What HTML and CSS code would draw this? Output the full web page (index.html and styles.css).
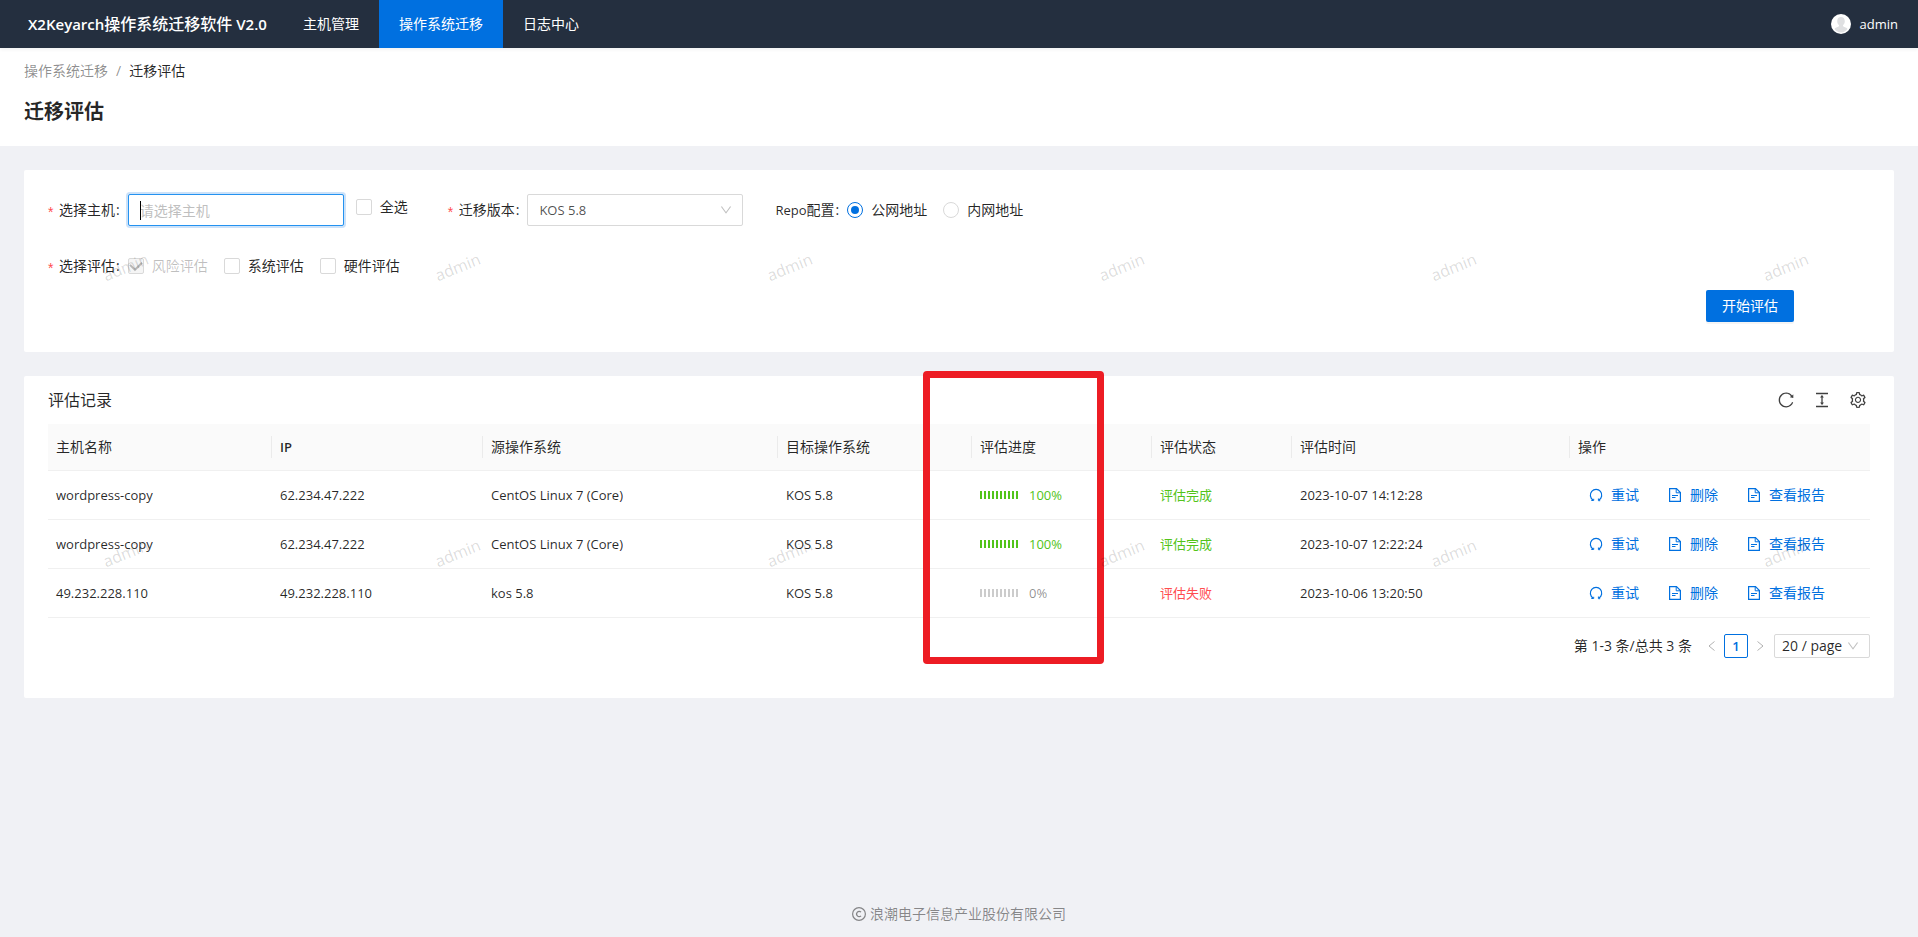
FILE: index.html
```html
<!DOCTYPE html>
<html lang="zh-CN">
<head>
<meta charset="utf-8">
<title>迁移评估</title>
<link rel="stylesheet" href="styles.css">
</head>
<body>
<svg class="sprite" aria-hidden="true">
  <symbol id="i-down" viewBox="64 64 896 896"><path d="M884 256h-75c-5.1 0-9.9 2.5-12.9 6.6L512 654.2 227.9 262.6c-3-4.1-7.8-6.6-12.9-6.6h-75c-6.5 0-10.3 7.4-6.5 12.7l352.6 486.1c12.8 17.6 39 17.6 51.7 0l352.6-486.1c3.9-5.3.1-12.7-6.4-12.7z"/></symbol>
  <symbol id="i-reload" viewBox="64 64 896 896"><path d="M909.1 209.3l-56.4 44.1C775.8 155.1 656.2 92 521.9 92 290 92 102.3 279.5 102 511.5 101.7 743.7 289.8 932 521.9 932c181.3 0 335.8-115 394.6-276.1 1.5-4.2-.7-8.9-4.9-10.3l-56.7-19.5a8 8 0 00-10.1 4.8c-1.8 5-3.8 10-5.9 14.9-17.3 41-42.1 77.8-73.7 109.4A344.77 344.77 0 01655.9 829c-42.3 17.9-87.4 27-133.8 27-46.5 0-91.5-9.1-133.8-27A341.5 341.5 0 01279 755.2a342.16 342.16 0 01-73.7-109.4c-17.9-42.4-27-87.4-27-133.9s9.1-91.5 27-133.9c17.3-41 42.1-77.8 73.7-109.4 31.6-31.6 68.4-56.4 109.3-73.8 42.3-17.9 87.4-27 133.8-27 46.5 0 91.5 9.1 133.8 27a341.5 341.5 0 01109.3 73.8c9.9 9.9 19.2 20.4 27.8 31.4l-60.2 47a8 8 0 003 14.1l175.6 43c5 1.2 9.9-2.6 9.9-7.7l.8-180.9c-.1-6.6-7.8-10.3-13-6.2z"/></symbol>
  <symbol id="i-height" viewBox="64 64 896 896"><path d="M840 836H184c-4.4 0-8 3.6-8 8v60c0 4.4 3.6 8 8 8h656c4.4 0 8-3.6 8-8v-60c0-4.4-3.6-8-8-8zm0-724H184c-4.4 0-8 3.6-8 8v60c0 4.4 3.6 8 8 8h656c4.4 0 8-3.6 8-8v-60c0-4.4-3.6-8-8-8zM610.8 378c6 0 9.4-7 5.7-11.7L515.7 238.7a7.14 7.14 0 00-11.3 0L403.6 366.3a7.23 7.23 0 005.7 11.7H476v268h-62.8c-6 0-9.4 7-5.7 11.7l100.8 127.5c2.9 3.7 8.5 3.7 11.3 0l100.8-127.5c3.7-4.7.4-11.7-5.7-11.7H548V378h62.8z"/></symbol>
  <symbol id="i-setting" viewBox="64 64 896 896"><path d="M924.8 625.7l-65.5-56c3.1-19 4.7-38.4 4.7-57.8s-1.6-38.8-4.7-57.8l65.5-56a32.03 32.03 0 009.3-35.2l-.9-2.6a443.74 443.74 0 00-79.7-137.9l-1.8-2.1a32.12 32.12 0 00-35.1-9.5l-81.3 28.9c-30-24.6-63.5-44-99.7-57.6l-15.7-85a32.05 32.05 0 00-25.8-25.7l-2.7-.5c-52.1-9.4-106.9-9.4-159 0l-2.7.5a32.05 32.05 0 00-25.8 25.7l-15.8 85.4a351.86 351.86 0 00-99 57.4l-81.9-29.1a32 32 0 00-35.1 9.5l-1.8 2.1a446.02 446.02 0 00-79.7 137.9l-.9 2.6c-4.5 12.5-.8 26.5 9.3 35.2l66.3 56.6c-3.1 18.8-4.6 38-4.6 57.1 0 19.2 1.5 38.4 4.6 57.1L99 625.5a32.03 32.03 0 00-9.3 35.2l.9 2.6c18.1 50.4 44.9 96.9 79.7 137.9l1.8 2.1a32.12 32.12 0 0035.1 9.5l81.9-29.1c29.8 24.5 63.1 43.9 99 57.4l15.8 85.4a32.05 32.05 0 0025.8 25.7l2.7.5a449.4 449.4 0 00159 0l2.7-.5a32.05 32.05 0 0025.8-25.7l15.7-85a350 350 0 0099.7-57.6l81.3 28.9a32 32 0 0035.1-9.5l1.8-2.1c34.8-41.1 61.6-87.5 79.7-137.9l.9-2.6c4.5-12.3.8-26.3-9.3-35zM788.3 465.9c2.5 15.1 3.8 30.6 3.8 46.1s-1.3 31-3.8 46.1l-6.6 40.1 74.7 63.9a370.03 370.03 0 01-42.6 73.6L721 702.8l-31.4 25.8c-23.9 19.6-50.5 35-79.3 45.8l-38.1 14.3-17.9 97a377.5 377.5 0 01-85 0l-17.9-97.2-37.8-14.5c-28.5-10.8-55-26.2-78.7-45.7l-31.4-25.9-93.4 33.2c-17-22.9-31.2-47.6-42.6-73.6l75.5-64.5-6.5-40c-2.4-14.9-3.7-30.3-3.7-45.5 0-15.3 1.2-30.6 3.7-45.5l6.5-40-75.5-64.5c11.3-26.1 25.6-50.7 42.6-73.6l93.4 33.2 31.4-25.9c23.7-19.5 50.2-34.9 78.7-45.7l37.9-14.3 17.9-97.2c28.1-3.2 56.8-3.2 85 0l17.9 97 38.1 14.3c28.7 10.8 55.4 26.2 79.3 45.8l31.4 25.8 92.8-32.9c17 22.9 31.2 47.6 42.6 73.6L781.8 426l6.5 39.9zM512 326c-97.2 0-176 78.8-176 176s78.8 176 176 176 176-78.8 176-176-78.8-176-176-176zm79.2 255.2A111.6 111.6 0 01512 614c-29.9 0-58-11.7-79.2-32.8A111.6 111.6 0 01400 502c0-29.9 11.7-58 32.8-79.2C454 401.6 482.1 390 512 390c29.9 0 58 11.6 79.2 32.8A111.6 111.6 0 01624 502c0 29.9-11.7 58-32.8 79.2z"/></symbol>
  <symbol id="i-retry" viewBox="0 0 14 14"><path d="M4 11.900A5.700 5.700 0 1 1 9.900 12" fill="none" stroke="currentColor" stroke-width="1.200"/><path d="M2.300 12.500H4.700V10.800M9.400 10.500V12.700H11.200" fill="none" stroke="currentColor"/></symbol>
  <symbol id="i-file" viewBox="0 0 14 14"><path d="M1.600.6H8.500L12.400 4.500V13.400H1.600Z" fill="none" stroke="currentColor" stroke-width="1.200"/><path d="M8.200.8V4.800H12.200" fill="none" stroke="currentColor"/><path d="M4 7.500H10M4 9.500H7.500" stroke="currentColor"/></symbol>
  <symbol id="i-left" viewBox="0 0 12 12"><path d="M8.500 1.500L3 6l5.500 4.500" fill="none" stroke="currentColor"/></symbol>
  <symbol id="i-right" viewBox="0 0 12 12"><path d="M3.500 1.500L9 6l-5.500 4.500" fill="none" stroke="currentColor"/></symbol>
</svg>

<header class="topbar">
  <strong class="brand"><span class="brand-latin">X2Keyarch</span>操作系统迁移软件<span class="brand-latin"> V2.0</span></strong>
  <nav class="menu">
    <a href="#">主机管理</a>
    <a href="#" class="active" aria-current="page">操作系统迁移</a>
    <a href="#">日志中心</a>
  </nav>
  <button type="button" class="account">
    <svg class="avatar" viewBox="0 0 20 20" aria-hidden="true"><circle cx="10" cy="10" r="10" fill="#fff"/><path d="M10 3c2.400 0 3.800 1.600 3.800 4.200 0 1.800-.8 3.200-1.900 4 .1 1.300 1 1.700 2.600 2.200 1 .3 1.700.8 2 1.600A8.700 8.700 0 0 1 10 18.600 8.700 8.700 0 0 1 3.500 15c.3-.8 1-1.300 2-1.600 1.600-.5 2.500-.9 2.600-2.200-1.100-.8-1.900-2.200-1.900-4C6.200 4.600 7.600 3 10 3z" fill="#dfe0e2"/></svg>
    <span class="latin">admin</span>
  </button>
</header>

<div class="page-head">
  <nav class="crumbs" aria-label="面包屑"><a href="#">操作系统迁移</a><span class="sep">/</span><span class="here">迁移评估</span></nav>
  <h1>迁移评估</h1>
</div>

<main class="content">
  <form class="card filter">
    <div class="row">
      <label class="label required" for="host">选择主机</label>
      <span class="field"><input class="text" id="host" type="text" placeholder="请选择主机"></span>
      <label class="option all"><input type="checkbox"><span>全选</span></label>
      <label class="label required" for="version">迁移版本</label>
      <span class="select version"><select id="version"><option>KOS 5.8</option></select><svg class="chevron"><use href="#i-down"/></svg></span>
      <span class="label" id="repo-label"><span class="latin">Repo</span>配置</span>
      <span class="options" role="radiogroup" aria-labelledby="repo-label">
        <label class="option"><input type="radio" name="repo" checked><span>公网地址</span></label>
        <label class="option"><input type="radio" name="repo"><span>内网地址</span></label>
      </span>
    </div>
    <div class="row">
      <span class="label required" id="kind-label">选择评估</span>
      <span class="options" role="group" aria-labelledby="kind-label">
        <label class="option"><input type="checkbox" checked disabled><span>风险评估</span></label>
        <label class="option"><input type="checkbox"><span>系统评估</span></label>
        <label class="option"><input type="checkbox"><span>硬件评估</span></label>
      </span>
    </div>
    <div class="submit"><button type="button" class="primary">开始评估</button></div>
  </form>

  <section class="card records">
    <div class="toolbar">
      <h2>评估记录</h2>
      <button type="button" aria-label="刷新"><svg><use href="#i-reload"/></svg></button>
      <button type="button" aria-label="密度"><svg><use href="#i-height"/></svg></button>
      <button type="button" aria-label="列设置"><svg><use href="#i-setting"/></svg></button>
    </div>
    <table>
      <colgroup><col class="c-name"><col class="c-ip"><col class="c-source"><col class="c-target"><col class="c-progress"><col class="c-state"><col class="c-time"><col class="c-action"></colgroup>
      <thead><tr><th>主机名称</th><th class="latin">IP</th><th>源操作系统</th><th>目标操作系统</th><th>评估进度</th><th>评估状态</th><th>评估时间</th><th>操作</th></tr></thead>
      <tbody>
        <tr>
          <td class="latin">wordpress-copy</td><td class="latin">62.234.47.222</td><td class="latin">CentOS Linux 7 (Core)</td><td class="latin">KOS 5.8</td>
          <td><div class="progress done"><span class="steps"><i></i><i></i><i></i><i></i><i></i><i></i><i></i><i></i><i></i><i></i></span><span class="latin">100%</span></div></td>
          <td class="state ok">评估完成</td><td class="latin">2023-10-07 14:12:28</td>
          <td><div class="actions"><a href="#"><svg><use href="#i-retry"/></svg>重试</a><a href="#"><svg><use href="#i-file"/></svg>删除</a><a href="#"><svg><use href="#i-file"/></svg>查看报告</a></div></td>
        </tr>
        <tr>
          <td class="latin">wordpress-copy</td><td class="latin">62.234.47.222</td><td class="latin">CentOS Linux 7 (Core)</td><td class="latin">KOS 5.8</td>
          <td><div class="progress done"><span class="steps"><i></i><i></i><i></i><i></i><i></i><i></i><i></i><i></i><i></i><i></i></span><span class="latin">100%</span></div></td>
          <td class="state ok">评估完成</td><td class="latin">2023-10-07 12:22:24</td>
          <td><div class="actions"><a href="#"><svg><use href="#i-retry"/></svg>重试</a><a href="#"><svg><use href="#i-file"/></svg>删除</a><a href="#"><svg><use href="#i-file"/></svg>查看报告</a></div></td>
        </tr>
        <tr>
          <td class="latin">49.232.228.110</td><td class="latin">49.232.228.110</td><td class="latin">kos 5.8</td><td class="latin">KOS 5.8</td>
          <td><div class="progress"><span class="steps"><i></i><i></i><i></i><i></i><i></i><i></i><i></i><i></i><i></i><i></i></span><span class="latin">0%</span></div></td>
          <td class="state fail">评估失败</td><td class="latin">2023-10-06 13:20:50</td>
          <td><div class="actions"><a href="#"><svg><use href="#i-retry"/></svg>重试</a><a href="#"><svg><use href="#i-file"/></svg>删除</a><a href="#"><svg><use href="#i-file"/></svg>查看报告</a></div></td>
        </tr>
      </tbody>
    </table>
    <div class="pager">
      <span class="total">第 1-3 条/总共 3 条</span>
      <button type="button" class="step" aria-label="上一页" disabled><svg><use href="#i-left"/></svg></button>
      <button type="button" class="current latin">1</button>
      <button type="button" class="step" aria-label="下一页" disabled><svg><use href="#i-right"/></svg></button>
      <span class="select size"><select aria-label="每页条数"><option>20 / page</option></select><svg class="chevron"><use href="#i-down"/></svg></span>
    </div>
    <div class="marker" aria-hidden="true"></div>
  </section>

  <div class="watermark" aria-hidden="true">
    <span>admin</span><span>admin</span><span>admin</span><span>admin</span><span>admin</span><span>admin</span>
    <span>admin</span><span>admin</span><span>admin</span><span>admin</span><span>admin</span><span>admin</span>
  </div>
</main>

<footer class="footer">
  <svg viewBox="0 0 14 14" aria-hidden="true"><circle cx="7" cy="7" r="6.400" fill="none" stroke="currentColor" stroke-width="1.200"/><path d="M9 5.200A2.500 2.700 0 1 0 9 8.800" fill="none" stroke="currentColor" stroke-width="1.200"/></svg>
  <span>浪潮电子信息产业股份有限公司</span>
</footer>
</body>
</html>
```
FILE: styles.css
```css
:root {
  --blue: #0070e0;
  --text: rgba(0, 0, 0, 0.85);
  --muted: rgba(0, 0, 0, 0.45);
  --line: #d9d9d9;
}

* { box-sizing: border-box; }

body {
  margin: 0;
  min-height: 100vh;
  display: flex;
  flex-direction: column;
  background: #f0f1f5;
  color: var(--text);
  font: 14px/22px "Open Sans", "Noto Sans CJK SC", sans-serif;
}

button, input, select { font: inherit; color: inherit; margin: 0; }
button { cursor: pointer; }
a { color: inherit; text-decoration: none; }
svg { fill: currentColor; display: block; }
.sprite { display: none; }
.latin { font-size: 13px; }

.topbar {
  display: flex;
  align-items: stretch;
  height: 48px;
  padding: 0 20px 0 28px;
  background: #242f3f;
  color: #fff;
  box-shadow: 0 1px 4px rgba(0, 21, 41, 0.08);
  line-height: 48px;
  z-index: 1;
}
.brand { width: 255px; font-size: 16px; font-weight: 500; white-space: nowrap; }
.brand-latin { font-size: 15px; font-weight: 600; white-space: pre; }
.menu { display: flex; flex: 1; }
.menu a { padding: 0 20px; }
.menu .active { background: var(--blue); }
.account { display: flex; align-items: center; gap: 9px; border: 0; padding: 0; background: none; color: #fff; }
.avatar { width: 20px; height: 20px; }

.page-head { background: #fff; padding: 12px 24px 18px; }
.crumbs { color: var(--muted); }
.crumbs .sep { margin: 0 8px; }
.crumbs .here { color: var(--text); }
.page-head h1 { margin: 14px 0 0; font-size: 20px; line-height: 32px; font-weight: 600; }

.content { position: relative; padding: 24px; display: grid; gap: 24px; flex: 1; align-content: start; }
.card { background: #fff; border-radius: 2px; position: relative; padding: 24px; min-width: 0; }

.filter { padding-bottom: 30px; }
.filter .row { display: flex; align-items: center; height: 32px; }
.filter .row + .row { margin-top: 24px; }
.label { display: flex; align-items: center; margin-right: 8px; white-space: nowrap; }
.label::after { content: ":"; margin-left: 1px; }
.required::before { content: "*"; width: 7px; padding-top: 4px; margin-right: 4px; color: #ff4d4f; font-family: "Liberation Sans", sans-serif; }
.field { position: relative; display: block; }
.field::after { content: ""; position: absolute; left: 12px; top: 7px; width: 1px; height: 19px; background: #000; }
.text {
  display: block;
  width: 216px;
  height: 32px;
  padding: 0 11px;
  border: 1px solid #2492f0;
  border-radius: 2px;
  box-shadow: 0 0 0 2px rgba(0, 112, 224, 0.2);
  outline: 0;
}
.text::placeholder { color: #bfbfbf; }
.option { display: flex; align-items: center; gap: 8px; }
.option.all { align-self: flex-start; margin: 2px 40px 0 12px; }
.options { display: flex; gap: 16px; }
.option input { appearance: none; width: 16px; height: 16px; border: 1px solid var(--line); background: #fff; display: grid; place-items: center; }
.option [type="checkbox"] { border-radius: 2px; }
.option [type="radio"] { border-radius: 50%; }
.option [type="radio"]:checked { border-color: var(--blue); }
.option [type="radio"]:checked::before { content: ""; width: 8px; height: 8px; border-radius: 50%; background: var(--blue); }
.option input:disabled { background: #f5f5f5; }
.option input:disabled + span { color: rgba(0, 0, 0, 0.25); }
.option [type="checkbox"]:checked::before {
  content: "";
  width: 6px;
  height: 9px;
  margin-bottom: 3px;
  border: solid rgba(0, 0, 0, 0.25);
  border-width: 0 2px 2px 0;
  transform: rotate(45deg);
}

.select { position: relative; display: block; }
.select select { appearance: none; width: 100%; height: 100%; border: 1px solid var(--line); border-radius: 2px; background: #fff; }
.select .chevron { position: absolute; right: 11px; top: 50%; width: 12px; height: 12px; margin-top: -6px; color: rgba(0, 0, 0, 0.25); pointer-events: none; }
.version { width: 216px; height: 32px; margin-right: 32px; }
.version select { padding: 0 11px; color: rgba(0, 0, 0, 0.7); font-size: 13px; }

.submit { display: flex; justify-content: flex-end; margin-top: 8px; padding-right: 76px; }
.primary { height: 32px; padding: 0 16px; border: 0; border-radius: 2px; background: var(--blue); color: #fff; box-shadow: 0 2px 0 rgba(0, 0, 0, 0.045); }

.records { padding-top: 0; padding-bottom: 40px; }
.toolbar { display: flex; align-items: center; gap: 20px; height: 48px; padding-right: 4px; }
.toolbar h2 { flex: 1; margin: 0; font-size: 16px; font-weight: 400; }
.toolbar button { width: 16px; height: 16px; padding: 0; border: 0; background: none; color: rgba(0, 0, 0, 0.75); }
.toolbar svg { width: 16px; height: 16px; }

table { width: 100%; table-layout: fixed; border-collapse: separate; border-spacing: 0; }
.c-name { width: 224px; }
.c-ip { width: 211px; }
.c-source { width: 295px; }
.c-target { width: 194px; }
.c-progress { width: 180px; }
.c-state { width: 140px; }
.c-time { width: 278px; }
.c-action { width: 300px; }
th, td { text-align: left; border-bottom: 1px solid #f0f0f0; }
th { position: relative; padding: 12px 8px; background: #fafafa; font-weight: 400; }
th.latin { font-weight: 600; }
th:not(:last-child)::after { content: ""; position: absolute; right: 0; top: 12px; width: 1px; height: 22px; background: rgba(0, 0, 0, 0.06); }
td { padding: 13px 8px; }
.state { font-size: 13px; }
.ok { color: #52c41a; }
.fail { color: #ff4d4f; }
.progress { display: flex; align-items: center; gap: 11px; color: var(--muted); }
.progress.done { color: #52c41a; }
.steps { display: flex; gap: 2px; }
.steps i { width: 2px; height: 8px; background: #ccc; }
.done .steps i { background: #52c41a; }
.actions { display: flex; gap: 29px; padding-left: 11px; color: var(--blue); }
.actions a { display: flex; align-items: center; gap: 8px; }
.actions svg { width: 14px; height: 14px; }

.pager { display: flex; justify-content: flex-end; align-items: center; margin-top: 16px; }
.total { margin-right: 8px; }
.step { width: 24px; height: 24px; padding: 6px; border: 0; background: none; color: rgba(0, 0, 0, 0.3); }
.step svg { width: 12px; height: 12px; }
.current { width: 24px; height: 24px; padding: 0; border: 1px solid var(--blue); border-radius: 2px; background: #fff; color: var(--blue); font-weight: 600; }
.size { width: 96px; height: 24px; margin-left: 2px; }
.size select { padding: 0 7px; }

.marker { position: absolute; left: 899px; top: -5px; width: 181px; height: 293px; border: 7px solid #ed1c24; border-radius: 4px; }

.watermark {
  position: absolute;
  inset: 0;
  display: grid;
  grid-template-columns: repeat(6, 332px);
  grid-auto-rows: 286px;
  padding: 110px 0 0 102px;
  overflow: hidden;
  color: rgba(0, 0, 0, 0.15);
  font-size: 16px;
  pointer-events: none;
}
.watermark span { justify-self: start; align-self: start; transform: rotate(-22deg); }

.footer { display: flex; justify-content: center; align-items: center; gap: 4px; padding-bottom: 12px; color: var(--muted); }
.footer svg { width: 14px; height: 14px; }
```
